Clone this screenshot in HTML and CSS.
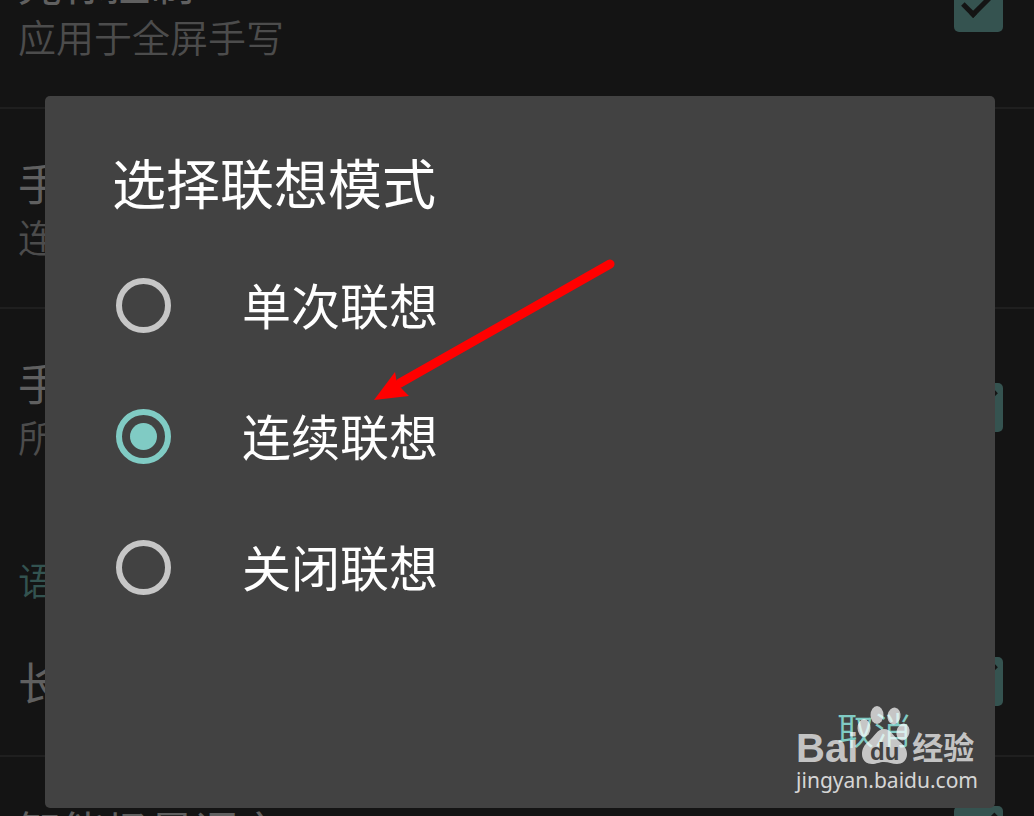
FILE: index.html
```
<!DOCTYPE html>
<html lang="zh-CN">
<head>
    <meta charset="UTF-8">
    <meta name="viewport" content="width=device-width, initial-scale=1.0">
    <title>选择联想模式</title>
    <link rel="stylesheet" href="styles.css">
</head>
<body>
    <div class="settings">
        <label class="setting">
            <span class="setting-text">
                <span class="setting-title">光标控制</span>
                <span class="setting-summary">应用于全屏手写</span>
            </span>
            <input type="checkbox" class="checkbox" checked>
        </label>
        <div class="setting">
            <span class="setting-text">
                <span class="setting-title">手</span>
                <span class="setting-summary">连</span>
            </span>
        </div>
        <label class="setting last">
            <span class="setting-text">
                <span class="setting-title">手</span>
                <span class="setting-summary">所</span>
            </span>
            <input type="checkbox" class="checkbox" checked>
        </label>
        <h3 class="category">语</h3>
        <label class="setting single">
            <span class="setting-title">长</span>
            <input type="checkbox" class="checkbox" checked>
        </label>
        <label class="setting single">
            <span class="setting-title">智能场景语言</span>
            <input type="checkbox" class="checkbox" checked>
        </label>
    </div>

    <div class="overlay">
        <form class="dialog">
            <h2>选择联想模式</h2>
            <label class="option">
                <input type="radio" name="mode" class="radio">
                <span>单次联想</span>
            </label>
            <label class="option">
                <input type="radio" name="mode" class="radio" checked>
                <span>连续联想</span>
            </label>
            <label class="option">
                <input type="radio" name="mode" class="radio">
                <span>关闭联想</span>
            </label>
            <div class="actions">
                <button type="button">取消</button>
            </div>

            <svg class="arrow" width="250" height="150" viewBox="0 0 250 150">
                <path d="M30 133L240 14" stroke="#f00" stroke-width="9" stroke-linecap="round"/>
                <path d="M4 150L25 122L27 133L32 139L39 146Z" fill="#f00"/>
            </svg>

            <div class="watermark">
                <div class="logo">
                    <span class="logo-bai">Bai</span>
                    <svg class="paw" width="50" height="60" viewBox="0 0 50 60">
                        <g fill="#fff" fill-opacity="0.7">
                            <ellipse cx="6" cy="24" rx="6.5" ry="9"/>
                            <ellipse cx="19" cy="11" rx="6.5" ry="9"/>
                            <ellipse cx="36" cy="12" rx="6.5" ry="8.5" transform="rotate(10 36 12)"/>
                            <ellipse cx="45" cy="28" rx="6.5" ry="8.5" transform="rotate(12 45 28)"/>
                            <path d="M26 25C33 25 36 33 42 38C47 42 49 46 49 50C49 56 45 60 39 60C34 60 31 58 26 58C21 58 19 60 14 60C8 60 4 56 4 50C4 45 6 41 11 37C17 32 19 25 26 25Z"/>
                        </g>
                        <text x="12" y="56" class="logo-du">du</text>
                    </svg>
                    <span class="logo-name">经验</span>
                </div>
                <div class="site">jingyan.baidu.com</div>
            </div>
        </form>
    </div>
</body>
</html>
```
FILE: styles.css
```
* {
    box-sizing: border-box;
}
body {
    margin: 0;
    height: 100vh;
    position: relative;
    overflow: hidden;
    background-color: #141414;
    font-family: "Noto Sans CJK SC", sans-serif;
}

/* settings list behind the dialog */
.settings {
    margin-top: -91px;
}
.setting {
    display: flex;
    justify-content: space-between;
    align-items: center;
    height: 200px;
    padding: 0 31px 1px 18px;
    border-bottom: 2px solid #1f1f1f;
}
.setting.last {
    border-bottom-color: transparent;
}
.setting.single {
    height: 149px;
}
.setting-text {
    display: flex;
    flex-direction: column;
}
.setting-title {
    font-size: 44px;
    line-height: 56px;
    font-weight: 400;
    color: #606060;
}
.setting-summary {
    font-size: 38px;
    line-height: 52px;
    font-weight: 350;
    color: #4c4c4c;
}
.category {
    margin: 0;
    padding: 44px 18px 3px;
    font-size: 38px;
    line-height: 52px;
    font-weight: 350;
    color: #335350;
}
.checkbox {
    appearance: none;
    position: relative;
    width: 49px;
    height: 49px;
    margin: 0;
    border-radius: 5px;
    background-color: #355350;
}
.checkbox:checked::before {
    content: "";
    position: absolute;
    left: 8px;
    top: 8px;
    width: 30px;
    height: 12px;
    border-left: 5px solid #141414;
    border-bottom: 5px solid #141414;
    transform: rotate(-45deg);
}

/* dialog */
.overlay {
    position: absolute;
    top: 0;
    left: 0;
    right: 0;
    padding: 96px 39px 8px 45px;
}
.dialog {
    position: relative;
    padding-top: 54px;
    border-radius: 5px;
    background-color: #424242;
    color: #fff;
}
.dialog h2 {
    margin: 0 0 26px;
    padding: 0 67px;
    font-size: 54px;
    line-height: 64px;
    font-weight: 400;
}
.option {
    display: flex;
    align-items: center;
    gap: 71px;
    height: 131px;
    padding: 0 71px;
    font-size: 49px;
    line-height: 64px;
}
.option span {
    padding-bottom: 4px;
}
.radio {
    appearance: none;
    display: flex;
    justify-content: center;
    align-items: center;
    width: 55px;
    height: 55px;
    margin: 0;
    border: 6px solid #c6c6c6;
    border-radius: 50%;
}
.radio:checked {
    border-color: #80cbc4;
}
.radio:checked::before {
    content: "";
    width: 27px;
    height: 27px;
    border-radius: 50%;
    background-color: #80cbc4;
}
.actions {
    display: flex;
    justify-content: flex-end;
    padding: 49px 60px 27px;
}
.actions button {
    height: 99px;
    padding: 0 24px 6px;
    border: none;
    background: none;
    font-family: inherit;
    font-size: 37px;
    font-weight: 350;
    color: #80cbc4;
}

.arrow {
    position: absolute;
    left: 325px;
    top: 154px;
}

/* watermark in the corner */
.watermark {
    position: absolute;
    right: 17px;
    bottom: 12px;
    color: rgba(255, 255, 255, 0.7);
}
.logo {
    display: flex;
    align-items: flex-end;
}
.logo-bai {
    font-family: "Liberation Sans", sans-serif;
    font-size: 40px;
    line-height: 32px;
    font-weight: 700;
}
.paw {
    overflow: visible;
}
.logo-du {
    font-family: "Liberation Sans", sans-serif;
    font-size: 24px;
    font-weight: 700;
    fill: #424242;
}
.logo-name {
    margin-left: 4px;
    font-size: 31px;
    line-height: 36px;
    font-weight: 700;
}
.site {
    font-family: "Noto Sans", sans-serif;
    font-size: 21px;
    line-height: 32px;
    color: rgba(255, 255, 255, 0.8);
}
```
